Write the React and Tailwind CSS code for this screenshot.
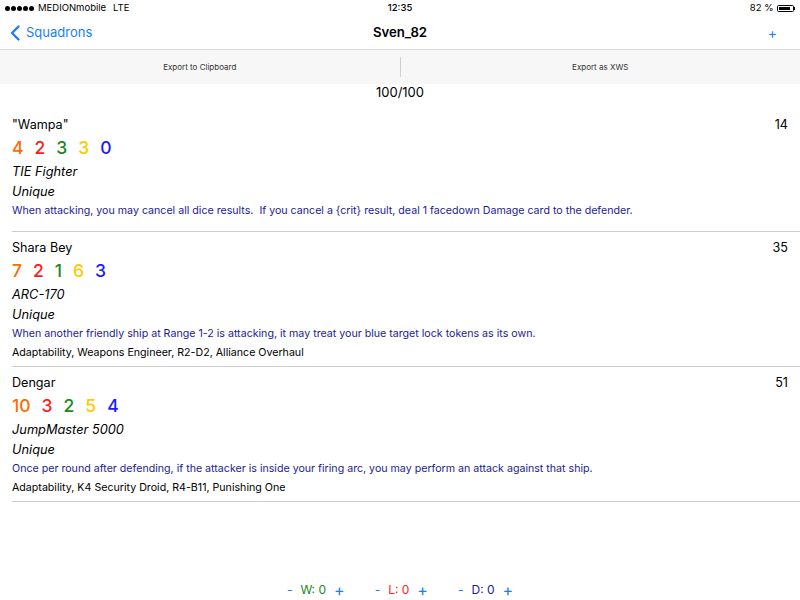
import React from "react";

const pilots = [
  {
    name: '"Wampa"',
    points: 14,
    stats: ["4", "2", "3", "3", "0"],
    ship: "TIE Fighter",
    text: "When attacking, you may cancel all dice results.  If you cancel a {crit} result, deal 1 facedown Damage card to the defender.",
    upgrades: "",
  },
  {
    name: "Shara Bey",
    points: 35,
    stats: ["7", "2", "1", "6", "3"],
    ship: "ARC-170",
    text: "When another friendly ship at Range 1-2 is attacking, it may treat your blue target lock tokens as its own.",
    upgrades: "Adaptability, Weapons Engineer, R2-D2, Alliance Overhaul",
  },
  {
    name: "Dengar",
    points: 51,
    stats: ["10", "3", "2", "5", "4"],
    ship: "JumpMaster 5000",
    text: "Once per round after defending, if the attacker is inside your firing arc, you may perform an attack against that ship.",
    upgrades: "Adaptability, K4 Security Droid, R4-B11, Punishing One",
  },
];

const statColors = ["text-[#ff6a00]", "text-[#ff1a1a]", "text-[#1a8a1a]", "text-[#ffc800]", "text-[#1a1aff]"];

function PilotCard({ pilot }) {
  return (
    <div className="pl-[12px]">
      <div className="pr-[12px] pt-[6px]">
        <div className="h-[20px] flex items-center justify-between text-[12.6px] text-black">
          <span>{pilot.name}</span>
          <span>{pilot.points}</span>
        </div>
        <div className="h-[26px] flex items-center gap-[11px] text-[17.5px] font-medium">
          {pilot.stats.map((s, i) => (
            <span key={i} className={statColors[i]}>
              {s}
            </span>
          ))}
        </div>
        <div className="h-[21px] flex items-center italic text-[12.8px]">{pilot.ship}</div>
        <div className="h-[19px] flex items-center italic text-[12.8px]">Unique</div>
        <div className="h-[19px] flex items-center text-[10.65px] text-[#1c1c94] whitespace-pre">{pilot.text}</div>
        {pilot.upgrades ? (
          <div className="h-[19px] flex items-center text-[10.65px] text-black">{pilot.upgrades}</div>
        ) : (
          <div className="h-[7px]" />
        )}
        <div className="h-[4px]" />
      </div>
      <div className="h-[1px] bg-[#cccccc]" />
    </div>
  );
}

export default function App() {
  return (
    <div className="w-[800px] h-[600px] flex flex-col bg-white text-black font-['Inter','Liberation_Sans',sans-serif] overflow-hidden">
      {/* status bar */}
      <div className="h-[16px] relative flex items-center justify-between px-[5px] text-[9.5px]">
        <div className="flex items-center gap-[4px]">
          <div className="flex gap-[1px]">
            {[0, 1, 2, 3, 4].map((i) => (
              <span key={i} className="w-[5px] h-[5px] rounded-full bg-black" />
            ))}
          </div>
          <span>MEDIONmobile</span>
          <span className="ml-[3px]">LTE</span>
        </div>
        <span className="absolute left-1/2 -translate-x-1/2 font-medium">12:35</span>
        <div className="flex items-center gap-[3px]">
          <span>82 %</span>
          <div className="flex items-center">
            <div className="w-[17px] h-[7px] border border-black rounded-[1.5px] p-[1px]">
              <div className="h-full w-[85%] bg-black" />
            </div>
            <div className="w-[1.5px] h-[3px] bg-black" />
          </div>
        </div>
      </div>

      {/* nav bar */}
      <div className="h-[34px] relative flex items-center justify-between px-[10px] border-b border-[#d8d8d8]">
        <div className="flex items-center gap-[6px] text-[#157efb] text-[13px]">
          <svg width="10" height="16" viewBox="0 0 10 16">
            <path d="M8.5 1.5 L2 8 L8.5 14.5" fill="none" stroke="#157efb" strokeWidth="2.3" strokeLinecap="round" strokeLinejoin="round" />
          </svg>
          <span>Squadrons</span>
        </div>
        <span className="absolute left-1/2 -translate-x-1/2 text-[13.2px] font-semibold">Sven_82</span>
        <span className="text-[#157efb] text-[14px] pr-[13px]">+</span>
      </div>

      {/* export buttons */}
      <div className="h-[34px] bg-[#f7f7f7] flex items-center text-[8px] text-[#333]">
        <div className="flex-1 text-center">Export to Clipboard</div>
        <div className="w-[1px] h-[20px] bg-[#d0d0d0]" />
        <div className="flex-1 text-center">Export as XWS</div>
      </div>

      <div className="h-[18px] flex items-center justify-center text-[13px]">100/100</div>

      <div className="flex-1 mt-[7px]">
        {pilots.map((p) => (
          <PilotCard key={p.name} pilot={p} />
        ))}
      </div>

      {/* score bar */}
      <div className="h-[20px] flex items-center justify-center gap-[30px] text-[12px]">
        <div className="flex items-center gap-[8px]">
          <span className="text-[#157efb]">-</span>
          <span className="text-[#1a8a1a]">W: 0</span>
          <span className="text-[#157efb] text-[16px]">+</span>
        </div>
        <div className="flex items-center gap-[8px]">
          <span className="text-[#157efb]">-</span>
          <span className="text-[#ff2020]">L: 0</span>
          <span className="text-[#157efb] text-[16px]">+</span>
        </div>
        <div className="flex items-center gap-[8px]">
          <span className="text-[#157efb]">-</span>
          <span className="text-[#1c1c94]">D: 0</span>
          <span className="text-[#157efb] text-[16px]">+</span>
        </div>
      </div>
    </div>
  );
}
